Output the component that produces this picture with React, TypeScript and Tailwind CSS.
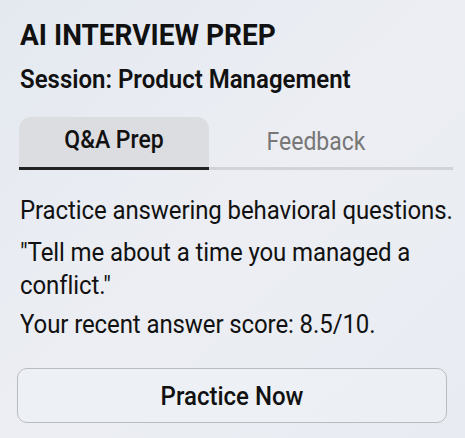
export default function App() {
  return (
    <div
      className="h-[438px] w-[465px] overflow-hidden bg-gradient-to-br from-[#e4e9f0] via-[#eceef3] to-[#e8ecf2] pl-5 pr-2 pt-[19px] text-[#111]"
      style={{ fontFamily: 'Roboto, "Noto Sans", sans-serif' }}
    >
      <h1 className="scale-y-[1.08] text-[28px] font-bold leading-[32px]">AI INTERVIEW PREP</h1>
      <h2 className="mt-[14px] scale-y-[1.1] text-[24px] font-semibold leading-[28px]">Session: Product Management</h2>

      <div className="ml-[-1px] mt-[24px] flex w-[434px] border-b-[3px] border-[#d2d3d7]">
        <div className="mb-[-3px] flex h-[53px] w-[190px] items-center justify-center rounded-t-xl border-b-[3px] border-[#222] bg-[#dcdde1] pb-[3px] text-[23px] font-medium">
          <span className="scale-y-[1.1]">Q&amp;A Prep</span>
        </div>
        <div className="ml-3 flex h-[50px] w-[190px] items-center justify-center text-[23px] text-[#777]">
          <span className="scale-y-[1.1]">Feedback</span>
        </div>
      </div>

      <div className="tracking-[-0.1px]">
        <p className="mt-[25px] scale-y-[1.1] text-[24px] leading-[30px]">Practice answering behavioral questions.</p>
        <p className="mt-[14px] scale-y-[1.1] text-[24px] leading-[30px]">"Tell me about a time you managed a conflict."</p>
        <p className="mt-[10px] scale-y-[1.1] text-[24px] leading-[30px]">Your recent answer score: 8.5/10.</p>
      </div>

      <button
        type="button"
        className="ml-[-3px] mt-[29px] flex h-[55px] w-[430px] items-center justify-center rounded-[10px] border border-[#bcbcbf] bg-[#eef1f5]/60 text-[24px] font-medium"
      >
        <span className="scale-y-[1.1]">Practice Now</span>
      </button>
    </div>
  )
}
